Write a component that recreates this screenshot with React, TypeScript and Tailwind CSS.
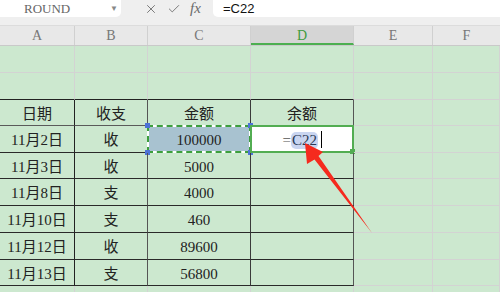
import React from "react";
import { X, Check } from "lucide-react";

const colWidths = [75, 73, 103, 103, 79, 67];
const colNames = ["A", "B", "C", "D", "E", "F"];

const tableRows = [
  ["日期", "收支", "金额", "余额"],
  ["11月2日", "收", "100000", ""],
  ["11月3日", "收", "5000", ""],
  ["11月8日", "支", "4000", ""],
  ["11月10日", "支", "460", ""],
  ["11月12日", "收", "89600", ""],
  ["11月13日", "支", "56800", ""],
];
const tableHeights = [26, 27, 26, 27, 27, 27, 26];

const serif = "font-['Liberation_Serif','Noto_Sans_CJK_SC',serif]";

const SelectedSource: React.FC = () => (
  <>
    <div className="absolute -left-[1px] -top-[1px] -right-[1px] -bottom-[1px] border-2 border-white" />
    <div className="absolute -left-[1px] -top-[1px] -right-[1px] -bottom-[1px] border-2 border-dashed border-[#3d9e3d]" />
    <div className="absolute -left-[3px] -top-[3px] w-[5px] h-[5px] bg-[#4d72d8]" />
    <div className="absolute -left-[3px] -bottom-[3px] w-[5px] h-[5px] bg-[#4d72d8]" />
    <div className="absolute -right-[3px] -top-[3px] w-[5px] h-[5px] bg-[#4d72d8]" />
    <div className="absolute -right-[3px] -bottom-[3px] w-[5px] h-[5px] bg-[#4d72d8]" />
  </>
);

const EditingCell: React.FC = () => (
  <div className="absolute -left-[1px] -top-[1px] -right-[1px] -bottom-[1px] border-2 border-[#52ad52] bg-white flex items-center justify-end pr-[30px]">
    <span className="text-[15px] text-[#555] leading-none mt-[2px]">=</span>
    <span className="text-[15px] text-[#2b3a55] leading-none bg-[#c9d5f0] rounded-[5px] px-[1px] py-[1px] mt-[2px]">C22</span>
    <span className="w-[1px] h-[17px] bg-black ml-[3px] mt-[1px]" />
    <div className="absolute -right-[3px] -bottom-[3px] w-[5px] h-[5px] bg-[#52ad52]" />
  </div>
);

const App: React.FC = () => {
  return (
    <div className={`relative w-[500px] h-[292px] overflow-hidden bg-[#cce8cf] ${serif}`}>
      {/* Formula bar */}
      <div className="h-[26px] bg-[#efefef] border-b border-[#dcdcdc] flex items-start">
        <div className="w-[121px] h-[17px] bg-white rounded-br-[5px] flex items-center relative">
          <span className="ml-[24px] text-[13px] leading-none text-[#666]">ROUND</span>
          <span className="absolute right-[3px] top-[3px] text-[8px] text-[#888]">▼</span>
        </div>
        <div className="w-[92px] h-[17px] flex items-center text-[#6a6a6a]">
          <X className="w-[14px] h-[14px] ml-[23px]" strokeWidth={1.5} />
          <Check className="w-[14px] h-[14px] ml-[9px]" strokeWidth={1.5} />
          <span className="ml-[9px] text-[15px] italic leading-none">fx</span>
        </div>
        <div className="flex-1 h-[17px] bg-white rounded-bl-[5px] flex items-center">
          <span className="ml-[10px] text-[13px] text-[#111] font-['Liberation_Sans',sans-serif]">=C22</span>
        </div>
      </div>

      {/* Column headers */}
      <div className="flex h-[20px] bg-[#e8e8e8] border-b border-[#c9c9c9]">
        {colNames.map((c, i) => (
          <div
            key={c}
            style={{ width: colWidths[i] }}
            className={`shrink-0 flex items-center justify-center text-[14px] ${
              i === 5 ? "" : "border-r border-[#d0d0d0]"
            } ${c === "D" ? "bg-[#d5d5d5] text-[#3f9b3f] border-b-2 border-b-[#4caf50] pt-[2px]" : "text-[#777]"}`}
          >
            {c}
          </div>
        ))}
      </div>

      {/* Rows above table */}
      {[27, 27].map((h, r) => (
        <div key={r} className="flex" style={{ height: h }}>
          {colWidths.map((w, i) => (
            <div
              key={i}
              style={{ width: w }}
              className={`shrink-0 border-r border-[#d3d3d3] border-b ${
                r === 1 && i < 4 ? "border-b-[#222]" : "border-b-[#d3d3d3]"
              }`}
            />
          ))}
        </div>
      ))}

      {/* Table */}
      {tableRows.map((row, r) => (
        <div key={r} className="flex" style={{ height: tableHeights[r] }}>
          {colWidths.map((w, i) => {
            const inTable = i < 4;
            const rightCls =
              i === 0
                ? "border-r-[#222]"
                : i === 1 || i === 3
                ? "border-r-[#555]"
                : i === 2
                ? "border-r-[#3a3a3a]"
                : "border-r-[#d3d3d3]";
            const bottomCls = inTable
              ? r === 0
                ? "border-b-[#5a5a5a]"
                : "border-b-[#2a2a2a]"
              : "border-b-[#d3d3d3]";
            const isSource = r === 1 && i === 2;
            const isEditing = r === 1 && i === 3;
            return (
              <div
                key={i}
                style={{ width: w }}
                className={`relative shrink-0 border-r border-b ${rightCls} ${bottomCls} flex items-center justify-center pt-[3px] text-[15px] text-[#222] ${
                  isSource ? "bg-[#a8c2d0]" : ""
                }`}
              >
                {inTable ? row[i] : ""}
                {isSource && <SelectedSource />}
                {isEditing && <EditingCell />}
              </div>
            );
          })}
        </div>
      ))}

      {/* Trailing row */}
      <div className="flex h-[20px]">
        {colWidths.map((w, i) => (
          <div key={i} style={{ width: w }} className="shrink-0 border-r border-[#d3d3d3]" />
        ))}
      </div>

      {/* Red annotation arrow */}
      <svg className="absolute left-0 top-0 pointer-events-none" width="500" height="292" viewBox="0 0 500 292">
        <polygon
          points="305,143 323,152 318.5,156 372,233 314.5,159.5 307,164"
          fill="#f52a1e"
        />
      </svg>
    </div>
  );
};

export default App;
